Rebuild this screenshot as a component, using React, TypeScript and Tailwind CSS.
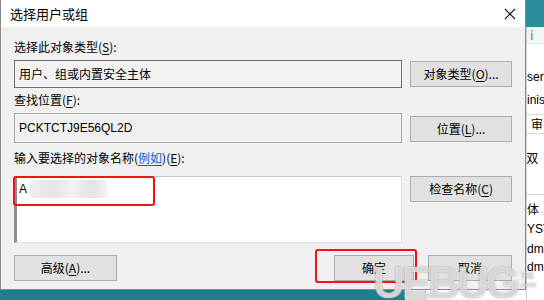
import React from 'react'

const font = "font-['Microsoft_YaHei','Noto_Sans_CJK_SC',sans-serif]"

const Btn = ({
  children,
  className = '',
}: {
  children: React.ReactNode
  className?: string
}) => (
  <div
    className={`flex h-[26px] items-center justify-center border border-[#adadad] bg-[#e1e1e1] text-[12px] text-black ${className}`}
  >
    {children}
  </div>
)

const Key = ({ k }: { k: string }) => <span className="underline underline-offset-2">{k}</span>

const App = () => {
  return (
    <div className={`flex h-[300px] w-[544px] overflow-hidden bg-[#1a7f8e] ${font}`}>
      <div className="flex w-[526px] flex-col">
        {/* dialog */}
        <div className="flex h-[290px] flex-col border-l border-r border-b border-[#8a8a8a] bg-[#f0f0f0]">
          <div className="flex h-[27px] items-center justify-between bg-white pl-[9px] pr-[8px]">
            <span className="text-[13px] text-black">选择用户或组</span>
            <svg width="12" height="12" viewBox="0 0 12 12" className="mr-[1px]">
              <path d="M1 1 L11 11 M11 1 L1 11" stroke="#111" strokeWidth="1.1" />
            </svg>
          </div>

          <div className="relative flex flex-1 flex-col px-[13px] pt-[12px]">
            <div className="h-4 text-[12px] leading-4">
              选择此对象类型(<Key k="S" />):
            </div>
            <div className="mt-[5px] flex items-start gap-[8px]">
              <div className="flex h-[28px] w-[389px] items-center border border-[#6e6e6e] bg-[#f2f2f2] pl-[4px] text-[12px]">
                用户、组或内置安全主体
              </div>
              <Btn className="mt-px w-[102px]">
                对象类型(<Key k="O" />)...
              </Btn>
            </div>

            <div className="mt-[4px] h-4 text-[12px] leading-4">
              查找位置(<Key k="F" />):
            </div>
            <div className="mt-[5px] flex items-start gap-[8px]">
              <div className="flex h-[30px] w-[389px] items-center border border-[#a9a9a9] bg-[#f0f0f0] pl-[4px] font-['Liberation_Sans','Noto_Sans_CJK_SC',sans-serif] text-[12px]">
                PCKTCTJ9E56QL2D
              </div>
              <Btn className="mt-[3px] w-[102px]">
                位置(<Key k="L" />)...
              </Btn>
            </div>

            <div className="mt-[7px] h-4 text-[12px] leading-4">
              输入要选择的对象名称(<span className="text-[#0066cc] underline underline-offset-2">例如</span>)(<Key k="E" />):
            </div>
            <div className="mt-[10px] flex items-start gap-[8px]">
              <div className="relative h-[67px] w-[389px] border-t border-r border-b border-l-[3px] border-t-[#c8c8c8] border-r-[#e3e3e3] border-b-[#e3e3e3] border-l-[#8c8c8c] bg-white">
                <div className="flex h-[24px] items-center pl-[2px] font-['Liberation_Sans',sans-serif] text-[12px]">
                  A
                  <div className="ml-[3px] h-[18px] w-[78px] rounded-sm bg-[linear-gradient(90deg,#ececec,#e2dede_30%,#efefef_55%,#dcdcdc_80%,#f2f2f2)] opacity-80" />
                </div>
                <div className="absolute left-[-4px] top-[-1px] h-[30px] w-[142px] rounded-[3px] border-2 border-[#f01414]" />
              </div>
              <Btn className="w-[102px]">
                检查名称(<Key k="C" />)
              </Btn>
            </div>

            <div className="mt-[12px] flex items-start justify-between">
              <Btn className="h-[25px] w-[103px]">
                高级(<Key k="A" />)...
              </Btn>
              <div className="flex gap-[14px]">
                <div className="relative">
                  <Btn className="h-[25px] w-[80px] border-[#0078d7]">确定</Btn>
                  <div className="absolute left-[-19px] top-[-6px] h-[34px] w-[102px] rounded-[3px] border-2 border-[#f01414]" />
                </div>
                <Btn className="h-[25px] w-[84px]">取消</Btn>
              </div>
            </div>

            {/* watermark */}
            <div className="pointer-events-none absolute bottom-[-16px] left-[372px] flex items-end font-['Liberation_Sans',sans-serif] text-[44px] font-bold leading-none tracking-[-3px] text-white/60 [text-shadow:0_0_2px_#9a9a9a]">
              UEBUG
              <div className="mb-[16px] ml-[3px] flex flex-col text-[7px] leading-[9px] tracking-normal">
                <span>下载</span>
                <span>.com</span>
              </div>
            </div>
          </div>
        </div>
        {/* strip below dialog */}
        <div className="flex flex-1">
          <div className="w-[405px] bg-[#1a7f8e]" />
          <div className="w-[20px] bg-[#e6e6e6]" />
          <div className="flex-1 border-l border-[#bdbdbd] bg-white" />
        </div>
      </div>

      {/* background window */}
      <div className="flex flex-1 flex-col">
        <div className="h-[27px] bg-[#2b8e9b]" />
        <div className="flex flex-1 flex-col overflow-hidden border-l border-[#d0d0d0] bg-white text-[12px] leading-4 text-black">
          <div className="h-[17px] border-b border-[#e5e5e5] bg-[#f5f5f5] pl-[3px] text-[#3a7bd5]">i</div>
          <div className="mt-[25px] whitespace-nowrap font-['Liberation_Sans',sans-serif]">sers</div>
          <div className="mt-[7px] whitespace-nowrap font-['Liberation_Sans',sans-serif]">inis</div>
          <div className="mt-[6px] h-[20px] border-y border-[#d8d8d8] pl-[4px] leading-[18px]">审</div>
          <div className="mt-[16px] -ml-[4px] whitespace-nowrap">i双</div>
          <div className="mt-[28px] border-t border-[#d8d8d8] pt-[6px] whitespace-nowrap">体</div>
          <div className="mt-[4px] whitespace-nowrap font-['Liberation_Sans',sans-serif]">YST</div>
          <div className="mt-[4px] whitespace-nowrap font-['Liberation_Sans',sans-serif]">dmi</div>
          <div className="mt-[2px] whitespace-nowrap font-['Liberation_Sans',sans-serif]">dmi</div>
        </div>
      </div>
    </div>
  )
}

export default App
